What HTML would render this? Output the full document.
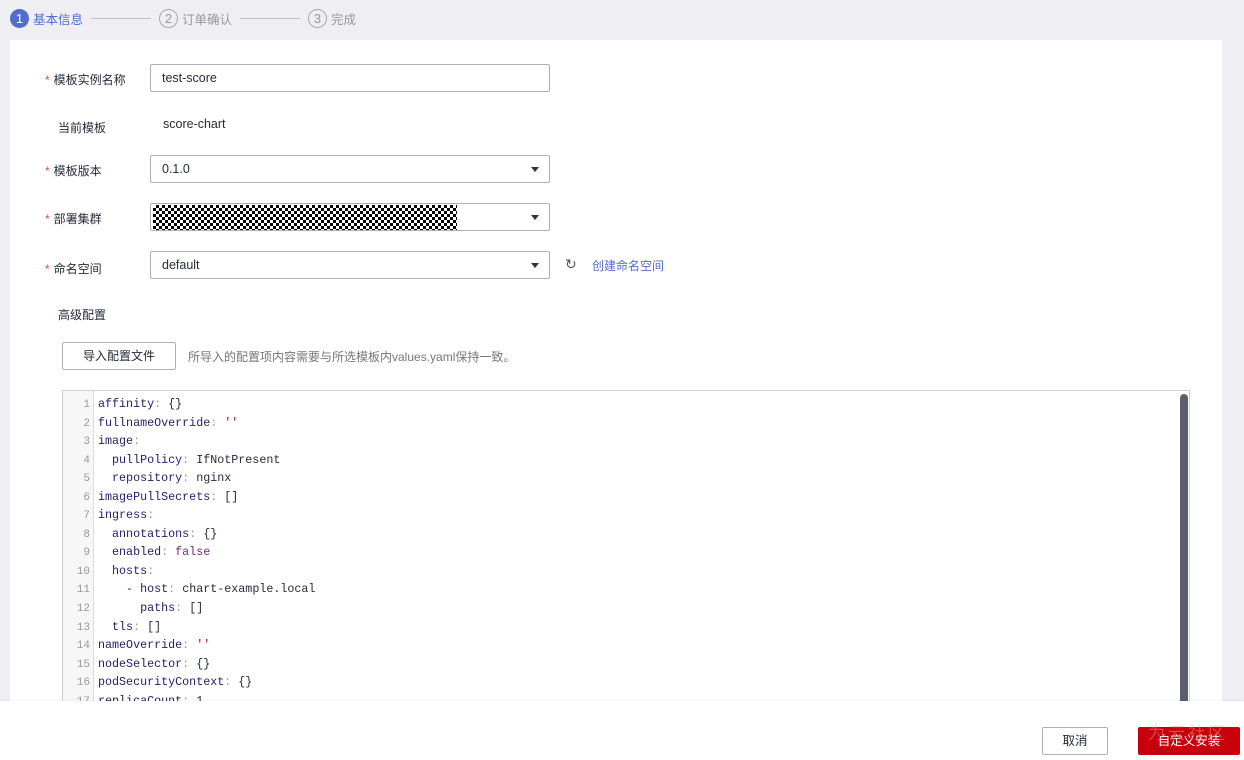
<!DOCTYPE html>
<html><head><meta charset="utf-8"><style>
*{margin:0;padding:0;box-sizing:border-box}
html,body{width:1244px;height:760px;overflow:hidden}
body{background:#eeeef3;font-family:"Liberation Sans","Noto Sans CJK SC",sans-serif;font-size:12px;color:#252b3a;position:relative}
.abs{position:absolute}
.steps{top:8px;left:10px;height:20px;display:flex;align-items:center}
.c{width:19px;height:19px;border-radius:50%;display:inline-flex;align-items:center;justify-content:center;font-size:13px}
.card{left:10px;top:40px;width:1212px;height:670px;background:#fff}
.lbl{font-size:12px;color:#252b3a}
.star{color:#e54545;margin-right:4px}
.inp{left:150px;width:400px;height:28px;border:1px solid #adb0b8;border-radius:2px;background:#fff;padding-left:11px;line-height:26px;font-size:12.5px}
.arr{position:absolute;right:10px;top:11px;width:0;height:0;border-left:4px solid transparent;border-right:4px solid transparent;border-top:5px solid #333}
.editor{left:62px;top:390px;width:1128px;height:315px;border:1px solid #d0d0d4;background:#fff;overflow:hidden}
.gut{position:absolute;left:0;top:0;width:31px;height:100%;background:#f7f7f7;border-right:1px solid #ddd}
.code{position:absolute;left:0;top:4px;font-family:"Liberation Mono",monospace;font-size:11.7px;line-height:18.55px}
.code div{white-space:pre;height:18.55px}
.code .n{display:inline-block;width:27px;text-align:right;color:#999;margin-right:8px;font-size:11px}
.k{color:#1f1f6b}.p{color:#999}.s{color:#a11}.b{color:#7a2b7a}
.foot{left:0;top:701px;width:1244px;height:59px;background:#fff;box-shadow:0 -1px 3px rgba(0,0,0,.05)}
</style></head><body>
<div class="abs steps">
<span class="c" style="background:#526ecc;color:#fff">1</span><span style="color:#526ecc;margin-left:4px;font-size:12.5px">基本信息</span>
<span style="width:60px;height:1px;background:#c0c0c8;margin:0 8px"></span>
<span class="c" style="border:1px solid #aaa;color:#999">2</span><span style="color:#999;margin-left:4px;font-size:12.5px">订单确认</span>
<span style="width:60px;height:1px;background:#c0c0c8;margin:0 8px"></span>
<span class="c" style="border:1px solid #aaa;color:#999">3</span><span style="color:#999;margin-left:4px;font-size:12.5px">完成</span>
</div>
<div class="abs card"></div>
<div class="abs lbl" style="left:45px;top:71px"><span class="star">*</span>模板实例名称</div>
<div class="abs inp" style="top:64px">test-score</div>
<div class="abs lbl" style="left:58px;top:119px">当前模板</div>
<div class="abs" style="left:163px;top:117px;font-size:12.5px">score-chart</div>
<div class="abs lbl" style="left:45px;top:162px"><span class="star">*</span>模板版本</div>
<div class="abs inp" style="top:155px">0.1.0<span class="arr"></span></div>
<div class="abs lbl" style="left:45px;top:210px"><span class="star">*</span>部署集群</div>
<div class="abs inp" style="top:203px;padding-left:0"><div style="position:absolute;left:2px;top:1px;width:304px;height:25px;background-image:repeating-conic-gradient(#000 0 25%,#fff 0 50%);background-size:6px 6px"></div><span class="arr"></span></div>
<div class="abs lbl" style="left:45px;top:260px"><span class="star">*</span>命名空间</div>
<div class="abs inp" style="top:251px">default<span class="arr"></span></div>
<div class="abs" style="left:565px;top:256px;font-size:14px;color:#555">↻</div>
<div class="abs" style="left:592px;top:257px;color:#526ecc">创建命名空间</div>
<div class="abs lbl" style="left:58px;top:306px">高级配置</div>
<div class="abs" style="left:62px;top:342px;width:114px;height:28px;border:1px solid #adb0b8;border-radius:2px;text-align:center;line-height:26px;font-size:12px">导入配置文件</div>
<div class="abs" style="left:188px;top:348px;color:#777">所导入的配置项内容需要与所选模板内values.yaml保持一致。</div>
<div class="abs editor">
<div class="gut"></div>
<div class="code"><div><span class="n">1</span><span class="k">affinity</span><span class="p">: </span>{}</div><div><span class="n">2</span><span class="k">fullnameOverride</span><span class="p">: </span><span class="s">''</span></div><div><span class="n">3</span><span class="k">image</span><span class="p">:</span></div><div><span class="n">4</span>  <span class="k">pullPolicy</span><span class="p">: </span>IfNotPresent</div><div><span class="n">5</span>  <span class="k">repository</span><span class="p">: </span>nginx</div><div><span class="n">6</span><span class="k">imagePullSecrets</span><span class="p">: </span>[]</div><div><span class="n">7</span><span class="k">ingress</span><span class="p">:</span></div><div><span class="n">8</span>  <span class="k">annotations</span><span class="p">: </span>{}</div><div><span class="n">9</span>  <span class="k">enabled</span><span class="p">: </span><span class="b">false</span></div><div><span class="n">10</span>  <span class="k">hosts</span><span class="p">:</span></div><div><span class="n">11</span>    - <span class="k">host</span><span class="p">: </span>chart-example.local</div><div><span class="n">12</span>      <span class="k">paths</span><span class="p">: </span>[]</div><div><span class="n">13</span>  <span class="k">tls</span><span class="p">: </span>[]</div><div><span class="n">14</span><span class="k">nameOverride</span><span class="p">: </span><span class="s">''</span></div><div><span class="n">15</span><span class="k">nodeSelector</span><span class="p">: </span>{}</div><div><span class="n">16</span><span class="k">podSecurityContext</span><span class="p">: </span>{}</div><div><span class="n">17</span><span class="k">replicaCount</span><span class="p">: </span>1</div></div>
<div style="position:absolute;left:1117px;top:3px;width:8px;height:320px;background:#5b5e6e;border-radius:4px"></div>
</div>
<div class="abs foot"></div>
<div class="abs" style="left:1042px;top:727px;width:66px;height:28px;border:1px solid #adb0b8;border-radius:2px;background:#fff;text-align:center;line-height:26px;font-size:12.5px">取消</div>
<div class="abs" style="left:1138px;top:727px;width:102px;height:28px;border-radius:2px;background:#c7000b;color:#fff;text-align:center;line-height:28px;font-size:12.5px">自定义安装</div>
<div class="abs" style="left:1148px;top:724px;font-size:17px;line-height:20px;color:rgba(255,150,150,.45);letter-spacing:3px">为云社区</div>
</body></html>
